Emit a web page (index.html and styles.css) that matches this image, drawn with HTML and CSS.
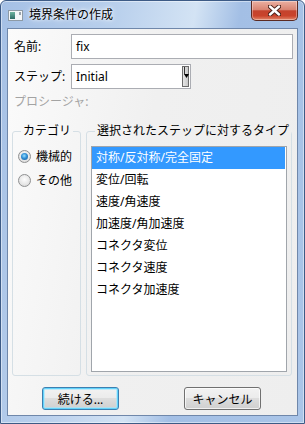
FILE: index.html
```html
<!DOCTYPE html>
<html lang="ja">
<head>
    <meta charset="UTF-8">
    <title>境界条件の作成</title>
    <link rel="stylesheet" href="styles.css">
</head>
<body>
    <div class="window">
        <div class="titlebar">
            <svg class="app-icon" width="15" height="11" viewBox="0 0 15 11">
                <defs>
                    <linearGradient id="ig" x1="0" y1="0" x2="0" y2="1">
                        <stop offset="0" stop-color="#6fb4a0"/>
                        <stop offset="1" stop-color="#2d6a66"/>
                    </linearGradient>
                </defs>
                <rect x="0.5" y="0.5" width="14" height="10" fill="#f4f6f8" stroke="#8d9aa6"/>
                <rect x="2" y="2" width="5" height="7" fill="url(#ig)"/>
                <rect x="11" y="2" width="2" height="3" fill="#9aa4ad"/>
            </svg>
            <span class="title">境界条件の作成</span>
            <div class="close">
                <svg width="13" height="11" viewBox="0 0 13 11">
                    <path d="M2 1.5 L11 9.5 M11 1.5 L2 9.5" stroke="#4b2119" stroke-width="4.4" stroke-linecap="round"/>
                    <path d="M2 1.5 L11 9.5 M11 1.5 L2 9.5" stroke="#ffffff" stroke-width="2.4" stroke-linecap="round"/>
                </svg>
            </div>
        </div>

        <div class="client">
            <div class="row">
                <span class="lbl">名前:</span>
                <div class="textbox">fix</div>
            </div>
            <div class="row">
                <span class="lbl">ステップ:</span>
                <div class="combo">
                    <span class="combo-text">Initial</span>
                    <span class="combo-btn">
                        <svg width="5" height="21" viewBox="0 0 5 21">
                            <path d="M0 7 H5 L2.5 11 Z" fill="#000"/>
                            <path d="M0.5 0 V8" stroke="#333" stroke-width="1"/>
                        </svg>
                    </span>
                </div>
            </div>
            <div class="row short disabled">
                <span class="lbl free">プロシージャ:</span>
            </div>

            <div class="groups">
                <fieldset class="group cat">
                    <legend>カテゴリ</legend>
                    <div class="radio checked"><span class="dot"></span>機械的</div>
                    <div class="radio"><span class="dot"></span>その他</div>
                </fieldset>
                <fieldset class="group types">
                    <legend>選択されたステップに対するタイプ</legend>
                    <ul class="listbox">
                        <li class="sel">対称/反対称/完全固定</li>
                        <li>変位/回転</li>
                        <li>速度/角速度</li>
                        <li>加速度/角加速度</li>
                        <li>コネクタ変位</li>
                        <li>コネクタ速度</li>
                        <li>コネクタ加速度</li>
                    </ul>
                </fieldset>
            </div>

            <div class="buttons">
                <button class="btn default">続ける...</button>
                <button class="btn">キャンセル</button>
            </div>
        </div>
    </div>
</body>
</html>
```

FILE: styles.css
```css
html, body {margin: 0; padding: 0}
body {font-family: "Noto Sans", "Noto Sans CJK JP", sans-serif; font-size: 12px; color: #000}

.window {position: relative; box-sizing: border-box; width: 305px; height: 424px;
         display: flex; flex-direction: column;
         border: 1px solid #3d5b86; border-radius: 6px 6px 0 0;
         background: linear-gradient(100deg, #a5c0e5 0%, #b8cfec 30%, #d3e3f4 52%, #a3bfe5 64%, #aac5e8 100%);
         box-shadow: inset 0 0 0 1px rgba(255,255,255,0.45)}

.titlebar {height: 27px; display: flex; align-items: center; padding-left: 7px}
.app-icon {margin-right: 6px; margin-top: 1px}
.title {line-height: 16px; margin-top: 1px; text-shadow: 0 0 6px #fff, 0 0 3px #fff}
.close {position: absolute; top: 0; right: 6px; width: 45px; height: 19px;
        display: flex; align-items: center; justify-content: center;
        border: 1px solid #5b2a22; border-top: none; border-radius: 0 0 5px 5px;
        background: linear-gradient(#eab0a2 0%, #d98573 45%, #c4432d 52%, #c9432b 78%, #e2876a 100%);
        box-shadow: inset 0 0 0 1px rgba(255,255,255,0.35)}

.client {flex: 1; display: flex; flex-direction: column; margin: 0 6px 7px 6px; padding: 0 4px 5px 4px;
         border: 1px solid #6f87aa; background: linear-gradient(100deg, #fbfbfb 0%, #f0f0f0 45%, #eeeeee 100%)}

.row {display: flex; align-items: center; height: 25px; margin-top: 5px; padding-left: 2px}
.row.short {height: 20px; margin-top: 3px}
.lbl {width: 57px; flex: none; line-height: 16px; white-space: nowrap}
.lbl.free {width: auto}
.disabled {color: #a3a3a3}

.textbox {flex: 1; box-sizing: border-box; height: 25px; padding-left: 4px; line-height: 23px;
          background: #fff; border: 1px solid #abadb3}
.combo {box-sizing: border-box; width: 120px; height: 25px; display: flex; align-items: center;
        background: #fff; border: 1px solid #abadb3; padding-right: 1px}
.combo-text {flex: 1; padding-left: 4px}
.combo-btn {box-sizing: border-box; width: 7px; height: 21px; display: flex; justify-content: flex-end;
            border: 1px solid #6b6b6b; background: linear-gradient(90deg, #e6e6e6, #c9c9c9)}
.combo-btn svg {margin-right: -1px}

.groups {flex: 1; display: flex; gap: 5px; margin-top: 11px; margin-right: 1px}
.group {margin: 0; padding: 7px 4px 3px 4px; min-width: 0; display: flex; flex-direction: column;
        border: 1px solid #d5dfe5; border-radius: 3px}
.group legend {margin-left: 4px; padding: 0 2px; line-height: 16px; white-space: nowrap}
.cat {box-sizing: border-box; width: 69px; flex: none; padding: 7px 0 0 5px; gap: 4px}
.cat legend {margin-left: 3px}
.types {flex: 1}

.radio {display: flex; align-items: center; height: 20px; gap: 5px}
.dot {box-sizing: border-box; width: 13px; height: 13px; border-radius: 50%; border: 1px solid #8f9091;
      background: radial-gradient(circle at 50% 40%, #fdfdfd 0%, #e8e8e8 55%, #cfcfcf 100%);
      display: flex; align-items: center; justify-content: center}
.radio.checked .dot::after {content: ""; width: 7px; height: 7px; border-radius: 50%;
      background: radial-gradient(circle at 45% 40%, #9be0ff 0%, #2f8fd6 45%, #1a5591 100%)}

.listbox {flex: 1; margin: 0; padding: 0; list-style: none; background: #fff; border: 1px solid #a0a5ab}
.listbox li {height: 22px; line-height: 22px; padding-left: 4px; margin-right: 1px; white-space: nowrap}
.listbox li.sel {background: #3399ff; color: #fff}

.buttons {display: flex; justify-content: center; gap: 65px; margin-top: 11px; padding-right: 2px}
.btn {box-sizing: border-box; width: 77px; height: 23px; padding: 0; font: inherit; color: #000;
      border: 1px solid #707070; border-radius: 3px;
      background: linear-gradient(#f2f2f2 0%, #ebebeb 50%, #dddddd 50%, #cfcfcf 100%);
      box-shadow: inset 0 0 0 1px rgba(255,255,255,0.7)}
.btn.default {border-color: #3c7fb1; box-shadow: inset 0 0 0 1px #62d3fb, inset 0 0 0 2px rgba(160,230,255,0.6)}
```
